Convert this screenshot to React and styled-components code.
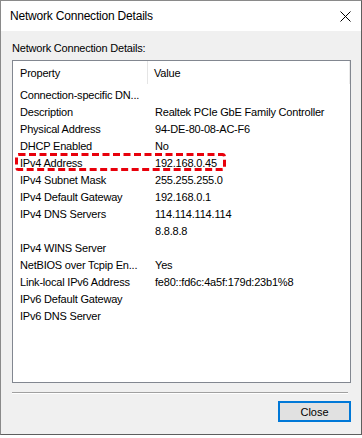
import styled, { createGlobalStyle } from "styled-components";

const GlobalStyle = createGlobalStyle`
  html, body {
    margin: 0;
    padding: 0;
    background: #ffffff;
  }
  body {
    font-family: "Liberation Sans", Arial, sans-serif;
    font-size: 11px;
    letter-spacing: -0.2px;
    color: #000;
  }
`;

const Window = styled.div`
  box-sizing: border-box;
  width: 362px;
  height: 435px;
  border: 1px solid #8a8a8a;
  border-right-color: #5e5e5e;
  border-bottom-color: #5e5e5e;
  display: flex;
  flex-direction: column;
  background: #f0f0f0;
`;

const TitleBar = styled.div`
  height: 30px;
  background: #ffffff;
  display: flex;
  align-items: center;
  justify-content: space-between;
  padding: 0 10px 0 9px;
`;

const Title = styled.span`
  font-size: 12px;
  letter-spacing: -0.2px;
`;

const Body = styled.div`
  flex: 1;
  display: flex;
  flex-direction: column;
  padding: 10px 10px 0 11px;
`;

const GroupLabel = styled.div`
  line-height: 15px;
  margin-bottom: 4px;
`;

const ListView = styled.div`
  height: 321px;
  border: 1px solid #828790;
  background: #ffffff;
  display: flex;
  flex-direction: column;
`;

const HeaderRow = styled.div`
  display: flex;
  height: 25px;
  align-items: stretch;
`;

const HeaderCell = styled.div`
  display: flex;
  align-items: center;
  width: ${(p) => p.$width};
  padding-left: ${(p) => p.$pad}px;
  box-sizing: border-box;
  border-right: 1px solid ${(p) => (p.$last ? "#eaeaea" : "#e5e5e5")};
  flex: ${(p) => (p.$last ? 1 : "none")};
  margin-bottom: 2px;
`;

const Row = styled.div`
  position: relative;
  display: flex;
  height: 17px;
  align-items: center;
`;

const Cell = styled.div`
  width: ${(p) => p.$width || "auto"};
  flex: ${(p) => (p.$width ? "none" : 1)};
  padding-left: ${(p) => p.$pad}px;
  box-sizing: border-box;
  white-space: nowrap;
  overflow: hidden;
  text-overflow: ellipsis;
`;

const Highlight = styled.svg`
  position: absolute;
  left: 2px;
  top: -1px;
  overflow: visible;
`;

const Separator = styled.div`
  height: 1px;
  background: #a0a0a0;
  border-bottom: 1px solid #ffffff;
  margin: 9px 3px 0 0;
`;

const Footer = styled.div`
  display: flex;
  justify-content: flex-end;
  padding-top: 7px;
`;

const Button = styled.button`
  width: 73px;
  height: 21px;
  box-sizing: border-box;
  border: 2px solid #0078d7;
  background: #e1e1e1;
  font: inherit;
  color: #000;
  padding: 0;
`;

const rows = [
  ["Connection-specific DN...", ""],
  ["Description", "Realtek PCIe GbE Family Controller"],
  ["Physical Address", "94-DE-80-08-AC-F6"],
  ["DHCP Enabled", "No"],
  ["IPv4 Address", "192.168.0.45", true],
  ["IPv4 Subnet Mask", "255.255.255.0"],
  ["IPv4 Default Gateway", "192.168.0.1"],
  ["IPv4 DNS Servers", "114.114.114.114"],
  ["", "8.8.8.8"],
  ["IPv4 WINS Server", ""],
  ["NetBIOS over Tcpip En...", "Yes"],
  ["Link-local IPv6 Address", "fe80::fd6c:4a5f:179d:23b1%8"],
  ["IPv6 Default Gateway", ""],
  ["IPv6 DNS Server", ""],
];

function CloseGlyph() {
  return (
    <svg width="11" height="11" viewBox="0 0 11 11">
      <path d="M0.5 0.5 L10.5 10.5 M10.5 0.5 L0.5 10.5" stroke="#000" strokeWidth="1" fill="none" />
    </svg>
  );
}

export default function App() {
  return (
    <>
      <GlobalStyle />
      <Window>
        <TitleBar>
          <Title>Network Connection Details</Title>
          <CloseGlyph />
        </TitleBar>
        <Body>
          <GroupLabel>Network Connection Details:</GroupLabel>
          <ListView>
            <HeaderRow>
              <HeaderCell $width="135px" $pad={7}>Property</HeaderCell>
              <HeaderCell $pad={6} $last>Value</HeaderCell>
            </HeaderRow>
            {rows.map(([prop, value, marked], i) => (
              <Row key={i}>
                <Cell $width="135px" $pad={7}>{prop}</Cell>
                <Cell $pad={7}>{value}</Cell>
                {marked && (
                  <Highlight width="211" height="18">
                    <rect
                      x="1.5"
                      y="1.5"
                      width="208"
                      height="15"
                      rx="2"
                      fill="none"
                      stroke="#e8000b"
                      strokeWidth="3"
                      strokeDasharray="7 3.5"
                    />
                  </Highlight>
                )}
              </Row>
            ))}
          </ListView>
          <Separator />
          <Footer>
            <Button>Close</Button>
          </Footer>
        </Body>
      </Window>
    </>
  );
}
